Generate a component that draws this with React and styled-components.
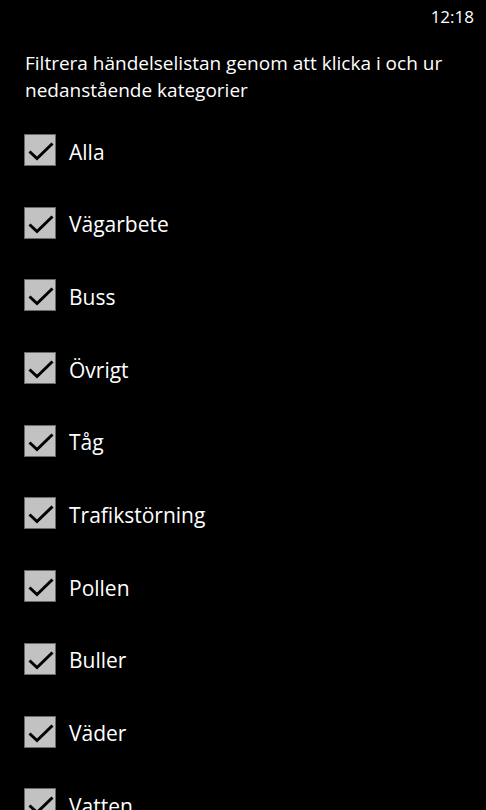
import React from "react";
import styled, { createGlobalStyle } from "styled-components";

const Global = createGlobalStyle`
  html, body { margin: 0; padding: 0; background: #000; }
  body { font-family: "Open Sans", "Noto Sans", sans-serif; color: #fff; }
`;

const Screen = styled.div`
  width: 486px;
  height: 810px;
  overflow: hidden;
  background: #000;
  display: flex;
  flex-direction: column;
`;

const StatusBar = styled.div`
  flex-shrink: 0;
  height: 32px;
  display: flex;
  justify-content: flex-end;
  align-items: center;
  padding-right: 12px;
  font-size: 17px;
  color: #fff;
`;

const Intro = styled.p`
  flex-shrink: 0;
  margin: 18px 0 0 25px;
  width: 450px;
  font-size: 19px;
  line-height: 27px;
  color: #fff;
`;

const List = styled.div`
  flex-shrink: 0;
  display: flex;
  flex-direction: column;
  gap: 40.7px;
  padding: 30px 0 0 24px;
`;

const Row = styled.label`
  flex-shrink: 0;
  display: flex;
  align-items: center;
  gap: 13px;
  height: 32px;
`;

const Box = styled.span`
  width: 30px;
  height: 30px;
  background: #c2c2c2;
  border: 1px solid #6a6a6a;
  display: flex;
  align-items: center;
  justify-content: center;
`;

const Label = styled.span`
  font-size: 21px;
  color: #fff;
  padding-top: 3px;
`;

const items = [
  "Alla",
  "Vägarbete",
  "Buss",
  "Övrigt",
  "Tåg",
  "Trafikstörning",
  "Pollen",
  "Buller",
  "Väder",
  "Vatten",
];

const Check = () => (
  <svg width="30" height="30" viewBox="0 0 30 30">
    <path d="M4.5 16.5 L12 23.5 L27.5 8.5" fill="none" stroke="#000" strokeWidth="3" />
  </svg>
);

export default function App() {
  return (
    <Screen>
      <Global />
      <StatusBar>12:18</StatusBar>
      <Intro>Filtrera händelselistan genom att klicka i och ur nedanstående kategorier</Intro>
      <List>
        {items.map((t) => (
          <Row key={t}>
            <Box>
              <Check />
            </Box>
            <Label>{t}</Label>
          </Row>
        ))}
      </List>
    </Screen>
  );
}
